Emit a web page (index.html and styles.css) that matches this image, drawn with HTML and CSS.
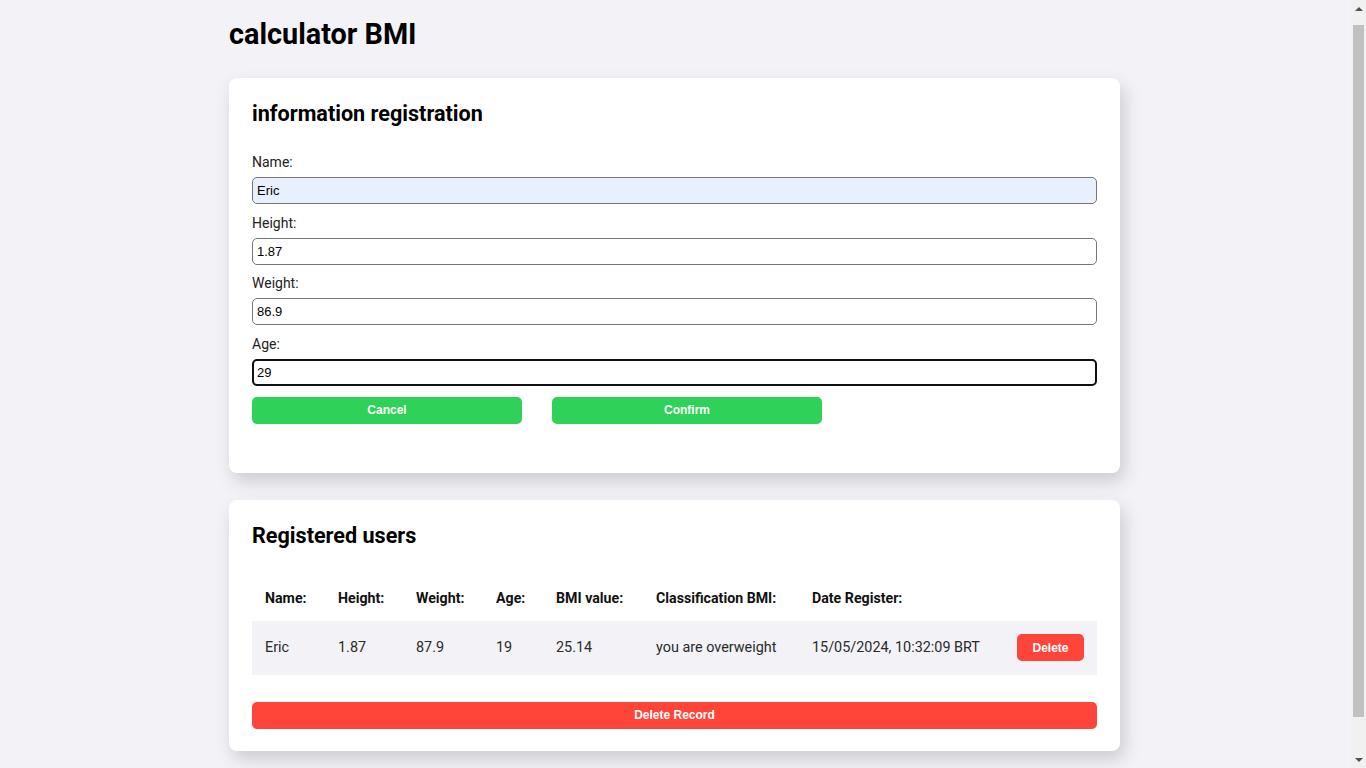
FILE: index.html
```html
<!DOCTYPE html>
<html lang="en">
<head>
<meta charset="utf-8">
<title>calculator BMI</title>
<link rel="stylesheet" href="styles.css">
</head>
<body>
<main class="container">
  <h1 class="title">calculator BMI</h1>

  <section class="card">
    <h2 class="card-title">information registration</h2>
    <form class="form">
      <label class="label" for="name">Name:</label>
      <input class="input autofill" id="name" type="text" value="Eric">
      <label class="label" for="height">Height:</label>
      <input class="input" id="height" type="text" value="1.87">
      <label class="label" for="weight">Weight:</label>
      <input class="input" id="weight" type="text" value="86.9">
      <label class="label" for="age">Age:</label>
      <input class="input focused" id="age" type="text" value="29">
      <div class="actions">
        <button type="button" class="btn btn-green">Cancel</button>
        <button type="button" class="btn btn-green">Confirm</button>
      </div>
    </form>
  </section>

  <section class="card card-users">
    <h2 class="card-title">Registered users</h2>
    <table class="table">
      <colgroup>
        <col class="c1"><col class="c2"><col class="c3"><col class="c4"><col class="c5"><col class="c6"><col class="c7"><col class="c8">
      </colgroup>
      <thead>
        <tr>
          <th>Name:</th>
          <th>Height:</th>
          <th>Weight:</th>
          <th>Age:</th>
          <th>BMI value:</th>
          <th>Classification BMI:</th>
          <th>Date Register:</th>
          <th></th>
        </tr>
      </thead>
      <tbody>
        <tr>
          <td>Eric</td>
          <td>1.87</td>
          <td>87.9</td>
          <td>19</td>
          <td>25.14</td>
          <td>you are overweight</td>
          <td>15/05/2024, 10:32:09 BRT</td>
          <td class="cell-action"><button type="button" class="btn btn-red btn-small">Delete</button></td>
        </tr>
      </tbody>
    </table>
    <button type="button" class="btn btn-red btn-wide">Delete Record</button>
  </section>
</main>

<div class="fake-scrollbar" aria-hidden="true">
  <div class="sb-arrow sb-up"></div>
  <div class="sb-track"><div class="sb-thumb"></div></div>
  <div class="sb-arrow sb-down"></div>
</div>
</body>
</html>
```

FILE: styles.css
```css
* {
  box-sizing: border-box;
}

html, body {
  margin: 0;
  padding: 0;
  background: #f2f2f7;
}

body {
  font-family: Roboto, "Liberation Sans", Arial, sans-serif;
  color: #000;
  padding-right: 17px;
  padding-bottom: 32px;
}

.container {
  width: 891px;
  margin: 0 auto;
}

.title {
  font-size: 28.8px;
  line-height: 34px;
  font-weight: 700;
  margin: 17px 0 27px;
}

.card {
  background: #fff;
  border-radius: 8px;
  padding: 23px 23px 49px;
  box-shadow: 4px 8px 18px rgba(0, 0, 0, 0.16);
}

.card-users {
  margin-top: 27px;
  padding-bottom: 22px;
}

.card-title {
  font-size: 21.6px;
  line-height: 26px;
  font-weight: 700;
  margin: 0;
}

.form {
  display: flex;
  flex-direction: column;
  margin-top: 27px;
}

.label {
  display: block;
  font-size: 14px;
  line-height: 17px;
  color: #222;
  margin-bottom: 6px;
}

.input {
  display: block;
  width: 100%;
  height: 27px;
  margin: 0 0 10.5px;
  padding: 0 4px;
  border: 1px solid #767676;
  border-radius: 5px;
  background: #fff;
  font-family: "Liberation Sans", Arial, sans-serif;
  font-size: 13px;
  color: #000;
  outline: none;
}

.input.autofill {
  background: #e8f0fe;
}

.input.focused {
  border: 2px solid #101010;
  padding: 0 3px;
}

.actions {
  display: flex;
  gap: 30px;
  margin-top: 0.5px;
}

.btn {
  border: none;
  border-radius: 5px;
  color: #fff;
  font-family: "Liberation Sans", Arial, sans-serif;
  font-weight: 700;
  font-size: 12px;
  height: 27px;
  padding: 0;
  cursor: pointer;
}

.btn-green {
  background: #30d158;
  width: 270px;
}

.btn-red {
  background: #ff453a;
}

.btn-small {
  width: 67px;
}

.btn-wide {
  display: block;
  width: 100%;
  margin-top: 27px;
}

.table {
  width: 100%;
  border-collapse: collapse;
  table-layout: fixed;
  margin-top: 26px;
  font-size: 14.4px;
}

.c1 { width: 73px; }
.c2 { width: 78px; }
.c3 { width: 80px; }
.c4 { width: 60px; }
.c5 { width: 100px; }
.c6 { width: 156px; }
.c7 { width: 205px; }
.c8 { width: 93px; }

.table th {
  text-align: left;
  font-weight: 700;
  font-size: 14.2px;
  color: #111;
  height: 46px;
  padding: 0 13px;
  white-space: nowrap;
}

.table td {
  color: #2a2a2a;
  height: 54px;
  padding: 0 13px;
  white-space: nowrap;
  background: #f2f2f7;
}

.table .cell-action {
  text-align: right;
}

/* imitation of the browser's classic scrollbar seen in the capture */
.fake-scrollbar {
  position: fixed;
  top: 0;
  right: 0;
  bottom: 0;
  width: 15px;
  background: #f1f1f1;
  display: flex;
  flex-direction: column;
}

.sb-arrow {
  height: 17px;
  display: flex;
  align-items: center;
  justify-content: center;
}

.sb-up::before,
.sb-down::before {
  content: "";
  width: 0;
  height: 0;
  border-left: 4px solid transparent;
  border-right: 4px solid transparent;
}

.sb-up::before {
  border-bottom: 4px solid #505050;
}

.sb-down::before {
  border-top: 4px solid #505050;
}

.sb-track {
  flex: 1;
  padding: 8px 2px 34px;
}

.sb-thumb {
  height: 100%;
  background: #c1c1c1;
}
```
